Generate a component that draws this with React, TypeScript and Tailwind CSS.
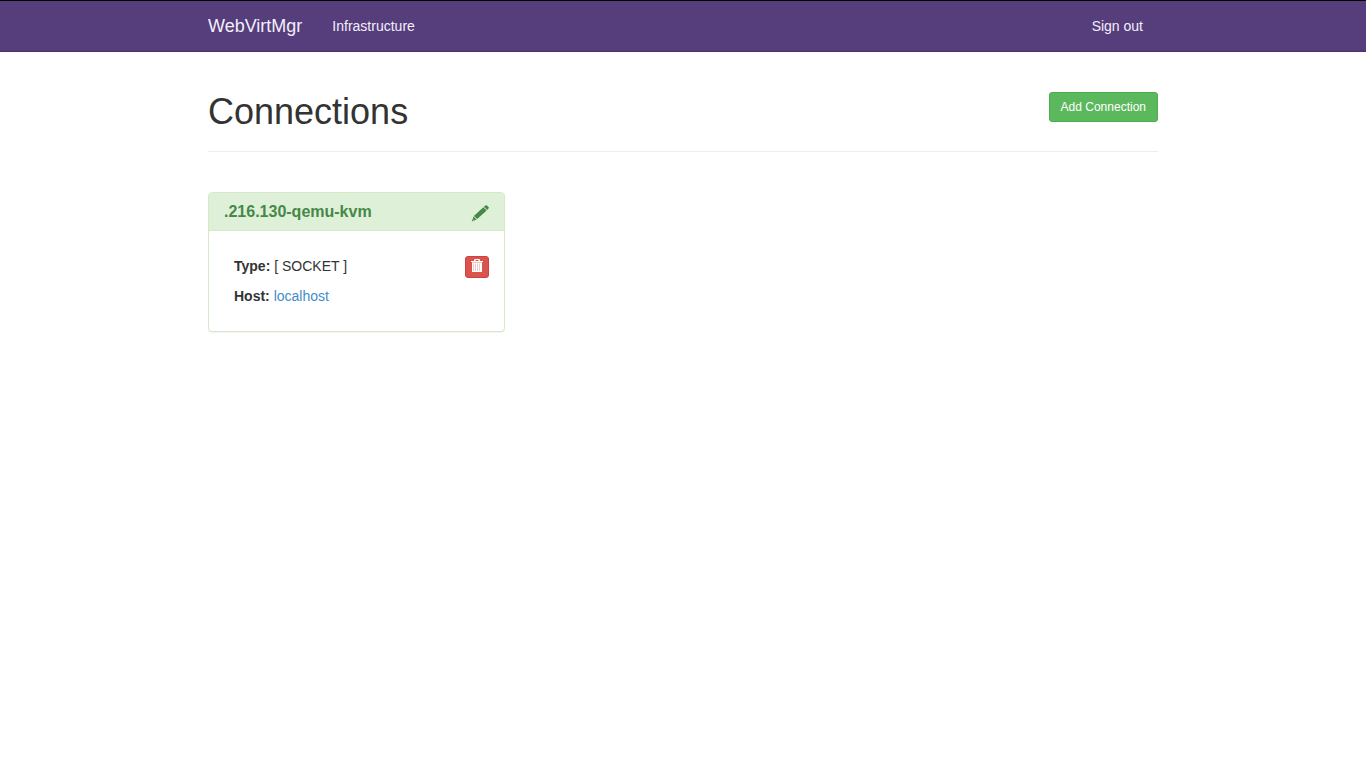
type Connection = { name: string; type: string; host: string };

const connections: Connection[] = [
  { name: '.216.130-qemu-kvm', type: 'SOCKET', host: 'localhost' },
];

function PencilIcon() {
  return (
    <svg width="18" height="18" viewBox="0 0 18 18" fill="currentColor" aria-hidden="true">
      <path d="M12.9 1.7 14.3.5Q15.2-.1 16 .6L17.5 2Q18.2 2.8 17.5 3.6L16.2 4.9Z" />
      <path d="M12.3 2.2 15.7 5.4 6.2 14.1 2.9 10.9Z" />
      <path d="M2.4 11.6 5.5 14.6 3.2 15.5 1.7 14Z" />
      <path d="M1.5 14.2 3 15.6.7 16.4Z" />
    </svg>
  );
}

function TrashIcon() {
  return (
    <svg width="12" height="13" viewBox="0 0 12 13" fill="currentColor" aria-hidden="true">
      <path d="M3 2V1Q3 0 4 0H8Q9 0 9 1V2H12V3H0V2ZM4.5 2H7.5V1H4.5Z" />
      <path d="M1 3.6H11V12Q11 13 10 13H2Q1 13 1 12Z" fillOpacity="0.7" />
      <path d="M1 3.6H11V4.6H1ZM1 12H11V12.4Q11 13 10 13H2Q1 13 1 12.4ZM1 4H2V13H1ZM3 4H4V13H3ZM5 4H6V13H5ZM7 4H8V13H7ZM9 4H11V13H9Z" />
    </svg>
  );
}

function Navbar() {
  return (
    <header className="border-t border-b border-t-black border-b-[#463265] bg-[#563d7c]">
      <nav className="mx-auto flex h-[50px] max-w-[950px] items-center text-[#f2effa]">
        <a href="#home" className="text-lg">WebVirtMgr</a>
        <a href="#infrastructure" className="ml-[15px] px-[15px]">Infrastructure</a>
        <a href="#signout" className="ml-auto px-[15px]">Sign out</a>
      </nav>
    </header>
  );
}

function ConnectionCard({ connection }: { connection: Connection }) {
  return (
    <section className="rounded border border-[#d6e9c6] bg-white shadow-[0_1px_1px_rgba(0,0,0,0.05)]">
      <div className="flex h-[38px] items-center justify-between rounded-t-[3px] border-b border-[#d6e9c6] bg-[#dff0d8] px-[15px] text-[#468847]">
        <h3 className="text-base font-bold">{connection.name}</h3>
        <button type="button" aria-label="Edit connection" className="mt-1 cursor-pointer">
          <PencilIcon />
        </button>
      </div>
      <div className="flex items-start justify-between pt-5 pr-[15px] pb-5 pl-[25px]">
        <div>
          <p className="leading-[30px]"><strong>Type:</strong> [ {connection.type} ]</p>
          <p className="leading-[30px]">
            <strong>Host:</strong> <a href="#host" className="text-[#428bca]">{connection.host}</a>
          </p>
        </div>
        <button
          type="button"
          aria-label="Delete connection"
          className="mt-[5px] mb-[13px] flex h-[22px] w-6 cursor-pointer justify-center rounded-[3px] border border-[#d43f3a] bg-[#d9534f] pt-[2px] text-white"
        >
          <TrashIcon />
        </button>
      </div>
    </section>
  );
}

export default function App() {
  return (
    <div className="min-h-screen bg-white font-['Liberation_Sans',Arial,sans-serif] text-sm text-[#333333]">
      <Navbar />
      <main className="mx-auto max-w-[950px] pt-10">
        <div className="flex items-start justify-between border-b border-[#eeeeee] pb-5">
          <h1 className="text-4xl leading-[39px]">Connections</h1>
          <button
            type="button"
            className="h-[30px] cursor-pointer rounded-[3px] border border-[#4cae4c] bg-[#5cb85c] px-[11px] text-xs text-white"
          >
            Add Connection
          </button>
        </div>
        <div className="mt-10 grid grid-cols-3 gap-[30px]">
          {connections.map((connection) => (
            <ConnectionCard key={connection.name} connection={connection} />
          ))}
        </div>
      </main>
    </div>
  );
}
